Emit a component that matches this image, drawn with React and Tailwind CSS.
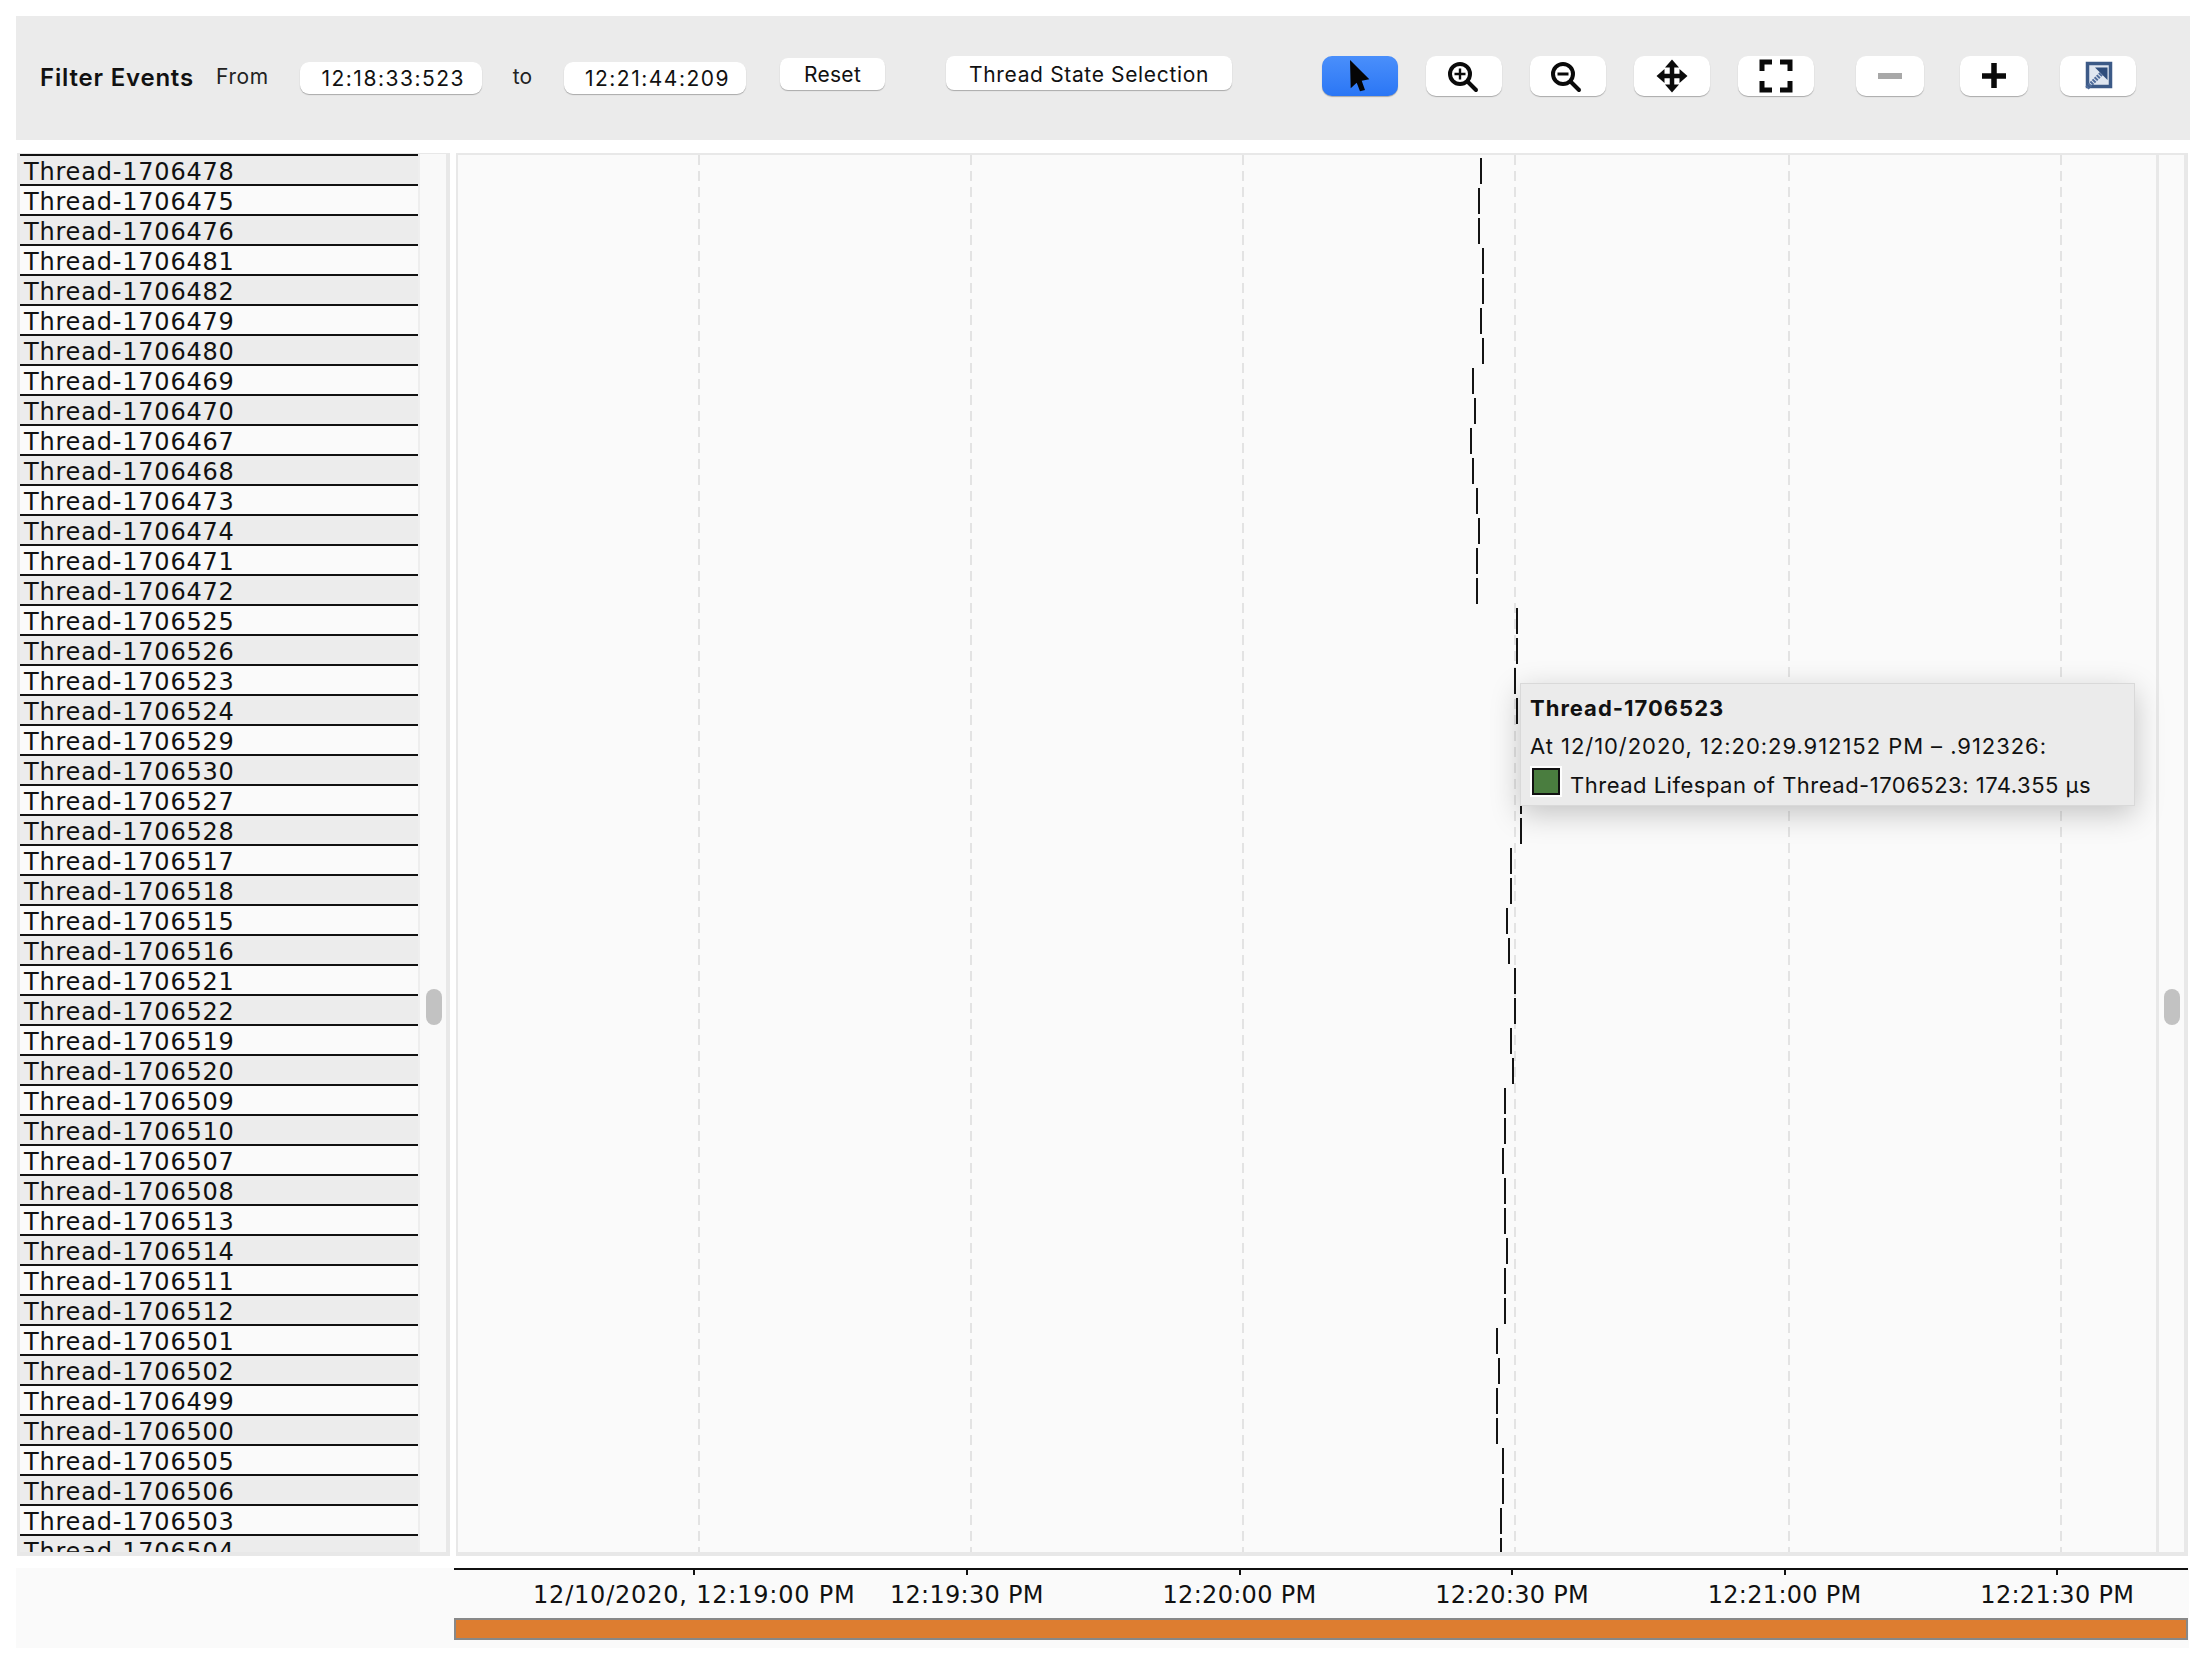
const threads = [
  [478, 1481], [475, 1479], [476, 1479], [481, 1483], [482, 1483], [479, 1481], [480, 1483], [469, 1473],
  [470, 1475], [467, 1471], [468, 1473], [473, 1477], [474, 1479], [471, 1477], [472, 1477], [525, 1517],
  [526, 1517], [523, 1515], [524, 1517], [529, 1521], [530, 1521], [527, 1521], [528, 1521], [517, 1511],
  [518, 1511], [515, 1507], [516, 1509], [521, 1515], [522, 1515], [519, 1511], [520, 1513], [509, 1505],
  [510, 1505], [507, 1503], [508, 1505], [513, 1505], [514, 1507], [511, 1505], [512, 1505], [501, 1497],
  [502, 1499], [499, 1497], [500, 1497], [505, 1503], [506, 1503], [503, 1501], [504, 1501]
]

const gridLines = [699, 971, 1243, 1515, 1789, 2061]
const ticks = [694, 967, 1240, 1512, 1785, 2057]
const tickLabels = ['12/10/2020, 12:19:00 PM', '12:19:30 PM', '12:20:00 PM', '12:20:30 PM', '12:21:00 PM', '12:21:30 PM']

const toolFont = "font-['Inter','Liberation_Sans',sans-serif]"
const dataFont = "font-['DejaVu_Sans','Liberation_Sans',sans-serif]"

function Tool({ className = '', children }) {
  return (
    <div className={`mt-[40px] h-[40px] shrink-0 rounded-[10px] bg-white shadow-[0_1px_1px_rgba(0,0,0,0.28)] ${className}`}>
      {children}
    </div>
  )
}

function Icon({ children }) {
  return (
    <svg viewBox="0 0 76 40" className="h-[40px] w-full" fill="none">
      {children}
    </svg>
  )
}

function Toolbar() {
  return (
    <div className={`ml-4 flex h-[124px] w-[2174px] items-start bg-[#ebebeb] text-[#111] ${toolFont}`}>
      <span className="ml-6 mt-[46px] w-[152px] text-[24px] leading-[32px] font-semibold tracking-[0.8px] whitespace-nowrap">Filter Events</span>
      <span className="ml-6 mt-[45px] text-[21px] leading-[32px] tracking-[0.6px] text-[#222]">From</span>
      <div className="ml-[31px] mt-[46px] flex h-[32px] w-[182px] items-center justify-center rounded-[9px] bg-white pt-[1px] pl-[5px] text-[21px] tracking-[1.5px] shadow-[0_1px_1px_rgba(0,0,0,0.28)]">12:18:33:523</div>
      <span className="ml-[31px] mt-[45px] text-[21px] leading-[32px] text-[#222]">to</span>
      <div className="ml-[32px] mt-[46px] flex h-[32px] w-[182px] items-center justify-center rounded-[9px] bg-white pt-[1px] pl-[5px] text-[21px] tracking-[1.5px] shadow-[0_1px_1px_rgba(0,0,0,0.28)]">12:21:44:209</div>
      <div className="ml-[34px] mt-[42px] flex h-[32px] w-[105px] items-center justify-center rounded-[8px] bg-white pt-[1px] text-[21px] tracking-[0.3px] shadow-[0_1px_1px_rgba(0,0,0,0.28)]">Reset</div>
      <div className="ml-[61px] mt-[40px] flex h-[34px] w-[286px] items-center justify-center rounded-[8px] bg-white pt-[3px] text-[21px] tracking-[0.65px] shadow-[0_1px_1px_rgba(0,0,0,0.28)]">Thread State Selection</div>

      <Tool className="ml-[90px] w-[76px] bg-gradient-to-b from-[#4a8ffb] to-[#2a76f5]">
        <Icon>
          <path d="M28 4 L47.3 23.3 L39.7 24.7 L43 34 L38 35.3 L34.7 26.7 L28.7 32.3 Z" fill="#050505" />
        </Icon>
      </Tool>
      <Tool className="ml-[28px] w-[76px]">
        <Icon>
          <circle cx="34" cy="18" r="10" stroke="#0a0a0a" strokeWidth="4" />
          <path d="M42 26 L50 34" stroke="#0a0a0a" strokeWidth="4" strokeLinecap="round" />
          <path d="M28.5 18 H39.5 M34 12.5 V23.5" stroke="#0a0a0a" strokeWidth="2.4" />
        </Icon>
      </Tool>
      <Tool className="ml-[28px] w-[76px]">
        <Icon>
          <circle cx="33" cy="18" r="10" stroke="#0a0a0a" strokeWidth="4" />
          <path d="M41 26 L49 34" stroke="#0a0a0a" strokeWidth="4" strokeLinecap="round" />
          <path d="M27.5 18 H38.5" stroke="#0a0a0a" strokeWidth="3" />
        </Icon>
      </Tool>
      <Tool className="ml-[28px] w-[76px]">
        <Icon>
          <path d="M38 8 V32 M26 20 H50" stroke="#0a0a0a" strokeWidth="4.5" />
          <path d="M38 3.5 L45 11.5 H31 Z M38 36.5 L45 28.5 H31 Z M22.5 20 L30.5 13 V27 Z M53.5 20 L45.5 13 V27 Z" fill="#0a0a0a" />
        </Icon>
      </Tool>
      <Tool className="ml-[28px] w-[76px]">
        <Icon>
          <path d="M34 6 H24 V15 M42 6 H52 V15 M24 25 V34 H34 M52 25 V34 H42" stroke="#0a0a0a" strokeWidth="5" />
        </Icon>
      </Tool>
      <Tool className="ml-[42px] w-[68px] bg-[#f4f4f4]">
        <svg viewBox="0 0 68 40" className="h-[40px] w-full" fill="none">
          <path d="M22 20 H46" stroke="#a8a8a8" strokeWidth="6" />
        </svg>
      </Tool>
      <Tool className="ml-[36px] w-[68px]">
        <svg viewBox="0 0 68 40" className="h-[40px] w-full" fill="none">
          <path d="M22 20 H46 M34 7 V32" stroke="#0a0a0a" strokeWidth="5.5" />
        </svg>
      </Tool>
      <Tool className="ml-[32px] w-[76px]">
        <Icon>
          <rect x="27.5" y="7.5" width="23" height="23" fill="#dfe6f0" stroke="#3c5a87" strokeWidth="3.5" />
          <path d="M27 32 L44 15" stroke="#4f6c9b" strokeWidth="4.5" strokeDasharray="2 1" />
          <path d="M35 11.5 H47.5 V24 Z" fill="#2f4d7c" />
        </Icon>
      </Tool>
    </div>
  )
}

function ThreadList() {
  return (
    <div className="flex h-full w-[433px] shrink-0 overflow-hidden border-t border-r-4 border-b-4 border-l-[3px] border-[#e8e8e8] bg-[#f9f9f9]">
      <div className={`h-full w-[400px] shrink-0 overflow-hidden border-r-2 border-[#eeeeee] text-[24px] tracking-[0.8px] text-[#111] ${dataFont}`}>
        {threads.map(([id], i) => (
          <div
            key={id}
            className={i % 2 === 0
              ? 'h-[30px] border-t-2 border-[#111] bg-[#ececec] pl-1 leading-[32px] whitespace-nowrap'
              : 'h-[30px] border-t-2 border-[#111] bg-[#fafafa] pl-1 leading-[32px] whitespace-nowrap'}
          >
            Thread-1706{id}
          </div>
        ))}
      </div>
      <div className="ml-[6px] mt-[835px] h-[36px] w-[16px] shrink-0 rounded-full bg-[#c2c2c2]" />
    </div>
  )
}

function Tooltip() {
  return (
    <div className={`absolute top-[528px] left-[1062px] flex h-[123px] w-[615px] flex-col border border-[#d9d9d9] bg-[#ebebeb] pl-[9px] text-[22px] text-[#111] shadow-[0_8px_28px_rgba(0,0,0,0.22)] ${toolFont}`}>
      <div className="mt-[5px] h-[38px] leading-[38px] font-bold tracking-[1px]">Thread-1706523</div>
      <div className="h-[38px] leading-[38px] whitespace-nowrap tracking-[0.95px]">At 12/10/2020, 12:20:29.912152 PM – .912326:</div>
      <div className="mt-[1px] flex h-[38px] items-start whitespace-nowrap">
        <div className="h-[31px] w-[32px] shrink-0 border-2 border-white">
          <div className="h-full w-full border-2 border-[#111] bg-[#4a7d3f]" />
        </div>
        <span className="ml-[8px] leading-[38px] tracking-[0.5px]">Thread Lifespan of Thread-1706523: 174.355 µs</span>
      </div>
    </div>
  )
}

function Chart() {
  return (
    <div className="relative flex h-full w-[1732px] shrink-0 overflow-hidden border-t-2 border-r-4 border-b-4 border-l-2 border-[#e8e8e8] bg-[#fafafa]">
      <svg width="1698" height="1397" className="block shrink-0">
        {gridLines.map(x => (
          <line key={x} x1={x - 458} x2={x - 458} y1="0" y2="1397" stroke="#e3e3e3" strokeWidth="2" strokeDasharray="10 6" />
        ))}
        {threads.map(([id, x], i) => (
          <rect key={id} x={x - 459} y={3 + i * 30} width="2" height="26" fill="#141414" />
        ))}
      </svg>
      <div className="w-[28px] shrink-0 border-l-[3px] border-[#e8e8e8] pl-[5px]">
        <div className="mt-[834px] h-[36px] w-[16px] rounded-full bg-[#c2c2c2]" />
      </div>
      <Tooltip />
    </div>
  )
}

function Axis() {
  return (
    <div className="mt-3 ml-4 h-[80px] w-[2173px] bg-[#fafafa] pl-[438px]">
      <svg width="1734" height="8" className="block">
        <rect x="0" y="0" width="1734" height="2" fill="#111" />
        {ticks.map(x => (
          <rect key={x} x={x - 455} y="0" width="2" height="7" fill="#111" />
        ))}
      </svg>
      <div className={`grid h-[42px] grid-cols-[repeat(6,272.6px)] pl-[104px] text-[24px] leading-[38px] text-[#111] ${dataFont}`}>
        {tickLabels.map((label, i) => (
          <div key={label} className={i === 0 ? 'flex justify-center tracking-[0.8px] whitespace-nowrap' : 'flex justify-center tracking-[0.3px] whitespace-nowrap'}>{label}</div>
        ))}
      </div>
      <div className="h-[22px] w-[1734px] border-2 border-[#888888] bg-[#dd7d30]" />
    </div>
  )
}

export default function App() {
  return (
    <div className="h-[1670px] w-[2212px] overflow-hidden bg-white pt-4">
      <Toolbar />
      <div className="mt-[13px] ml-[17px] flex h-[1403px] gap-[6px]">
        <ThreadList />
        <Chart />
      </div>
      <Axis />
    </div>
  )
}
